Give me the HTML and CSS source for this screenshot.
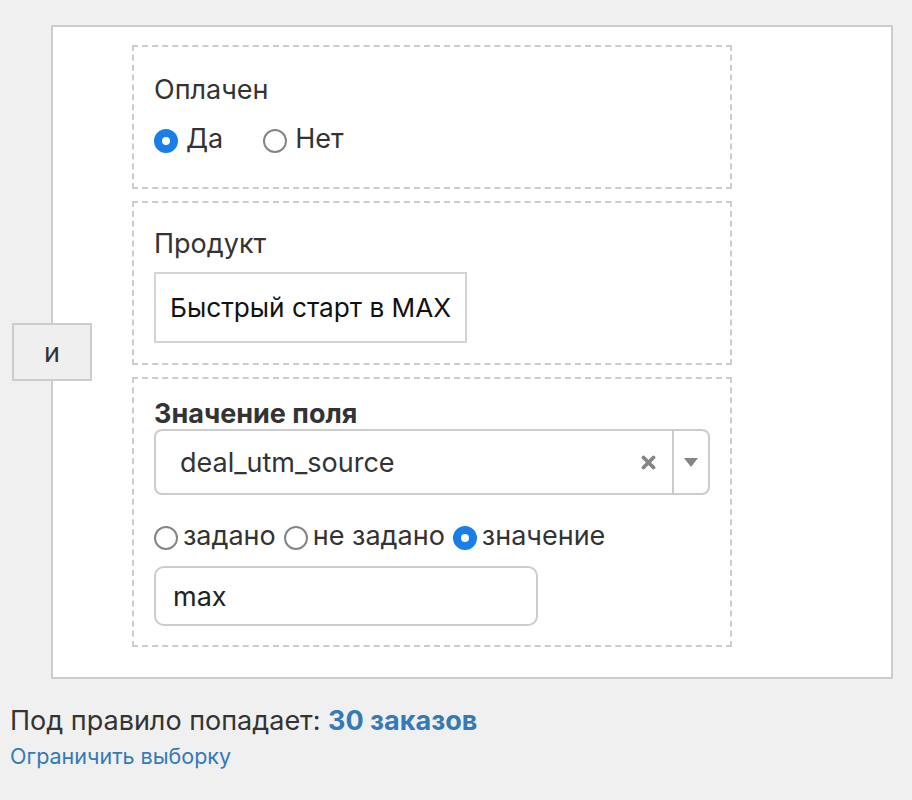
FILE: index.html
```html
<!DOCTYPE html>
<html lang="ru">
<head>
<meta charset="utf-8">
<title>Правило</title>
<link rel="stylesheet" href="styles.css">
</head>
<body>
<div class="rule">
  <div class="op-btn">и</div>
  <div class="panel">
    <div class="cond">
      <div class="label">Оплачен</div>
      <div class="radios wide">
        <span class="radio"><span class="dot on"></span>Да</span>
        <span class="radio"><span class="dot"></span>Нет</span>
      </div>
    </div>
    <div class="cond cond-product">
      <div class="label">Продукт</div>
      <div class="tag-box">Быстрый старт в MAX</div>
    </div>
    <div class="cond cond-field">
      <div class="label bold">Значение поля</div>
      <div class="select">
        <span class="select-value">deal_utm_source</span>
        <span class="select-clear">
          <svg width="15" height="15" viewBox="0 0 15 15"><path d="M2.5 2.5 L12.5 12.5 M12.5 2.5 L2.5 12.5" stroke="#858585" stroke-width="3.8" stroke-linecap="round"/></svg>
        </span>
        <span class="select-arrow">
          <svg width="14" height="9" viewBox="0 0 14 9"><path d="M0 0 H14 L7 9 Z" fill="#858585"/></svg>
        </span>
      </div>
      <div class="radios tight">
        <span class="radio"><span class="dot"></span>задано</span>
        <span class="radio"><span class="dot"></span>не задано</span>
        <span class="radio"><span class="dot on"></span>значение</span>
      </div>
      <div class="text-input">max</div>
    </div>
  </div>
</div>
<div class="summary">
  <div class="count">Под правило попадает: <a class="count-link">30 заказов</a></div>
  <a class="limit-link">Ограничить выборку</a>
</div>
</body>
</html>
```

FILE: styles.css
```css
html, body {
  margin: 0;
  padding: 0;
}
body {
  background: #f0f0f0;
  font-family: Inter, "Noto Sans", "DejaVu Sans", sans-serif;
  font-size: 27px;
  line-height: 37px;
  color: #333;
}
.rule {
  position: relative;
  margin: 25px 19px 0 51px;
}
.panel {
  background: #fff;
  border: 2px solid #cccccc;
  padding: 18px 0 30px 79px;
  display: flex;
  flex-direction: column;
  gap: 12px;
}
.op-btn {
  position: absolute;
  left: -39px;
  top: 50%;
  transform: translateY(-50%);
  width: 76px;
  height: 54px;
  border: 2px solid #cccccc;
  background: #efefef;
  display: flex;
  align-items: center;
  justify-content: center;
  z-index: 1;
}
.cond {
  box-sizing: border-box;
  width: 600px;
  border: 2px dashed #cccccc;
  padding: 24px 20px 30px;
}
.cond-product {
  padding: 22px 20px 20px;
}
.cond-field {
  padding: 20px 20px 19px;
}
.label {
  color: #333;
}
.label.bold {
  font-weight: 700;
  line-height: 30px;
}
.radios {
  display: flex;
  align-items: center;
}
.radios.wide {
  margin-top: 12px;
  gap: 40px;
}
.radios.tight {
  margin-top: 22px;
  gap: 8px;
}
.radio {
  display: inline-flex;
  align-items: center;
  gap: 8px;
}
.radios.tight .radio {
  gap: 5px;
}
.dot {
  box-sizing: border-box;
  width: 24px;
  height: 24px;
  margin-top: 4px;
  border-radius: 50%;
  border: 2px solid #858585;
  background: #fff;
  flex: none;
}
.dot.on {
  border: 8px solid #1a7ee8;
}
.tag-box {
  margin-top: 10px;
  width: fit-content;
  height: 71px;
  box-sizing: border-box;
  border: 2px solid #d4d4d4;
  padding: 0 14px;
  display: flex;
  align-items: center;
  color: #111;
  font-size: 26.2px;
  white-space: nowrap;
}
.select {
  box-sizing: border-box;
  width: 556px;
  height: 66px;
  border: 2px solid #cccccc;
  border-radius: 8px;
  display: flex;
  align-items: center;
}
.select-value {
  flex: 1;
  padding-left: 24px;
  color: #333;
}
.select-clear {
  display: flex;
  align-items: center;
  padding-right: 16px;
}
.select-arrow {
  align-self: stretch;
  border-left: 2px solid #cccccc;
  width: 34px;
  display: flex;
  align-items: center;
  justify-content: center;
}
.text-input {
  margin-top: 12px;
  box-sizing: border-box;
  width: 384px;
  height: 60px;
  border: 2px solid #cccccc;
  border-radius: 10px;
  padding: 0 17px;
  display: flex;
  align-items: center;
  color: #222;
}
.summary {
  padding: 23px 10px 0;
}
.count {
  line-height: 37px;
}
.count-link {
  color: #337ab7;
  font-weight: 700;
}
.limit-link {
  display: block;
  color: #337ab7;
  font-size: 21.5px;
  line-height: 30px;
  margin-top: 2px;
}
```
